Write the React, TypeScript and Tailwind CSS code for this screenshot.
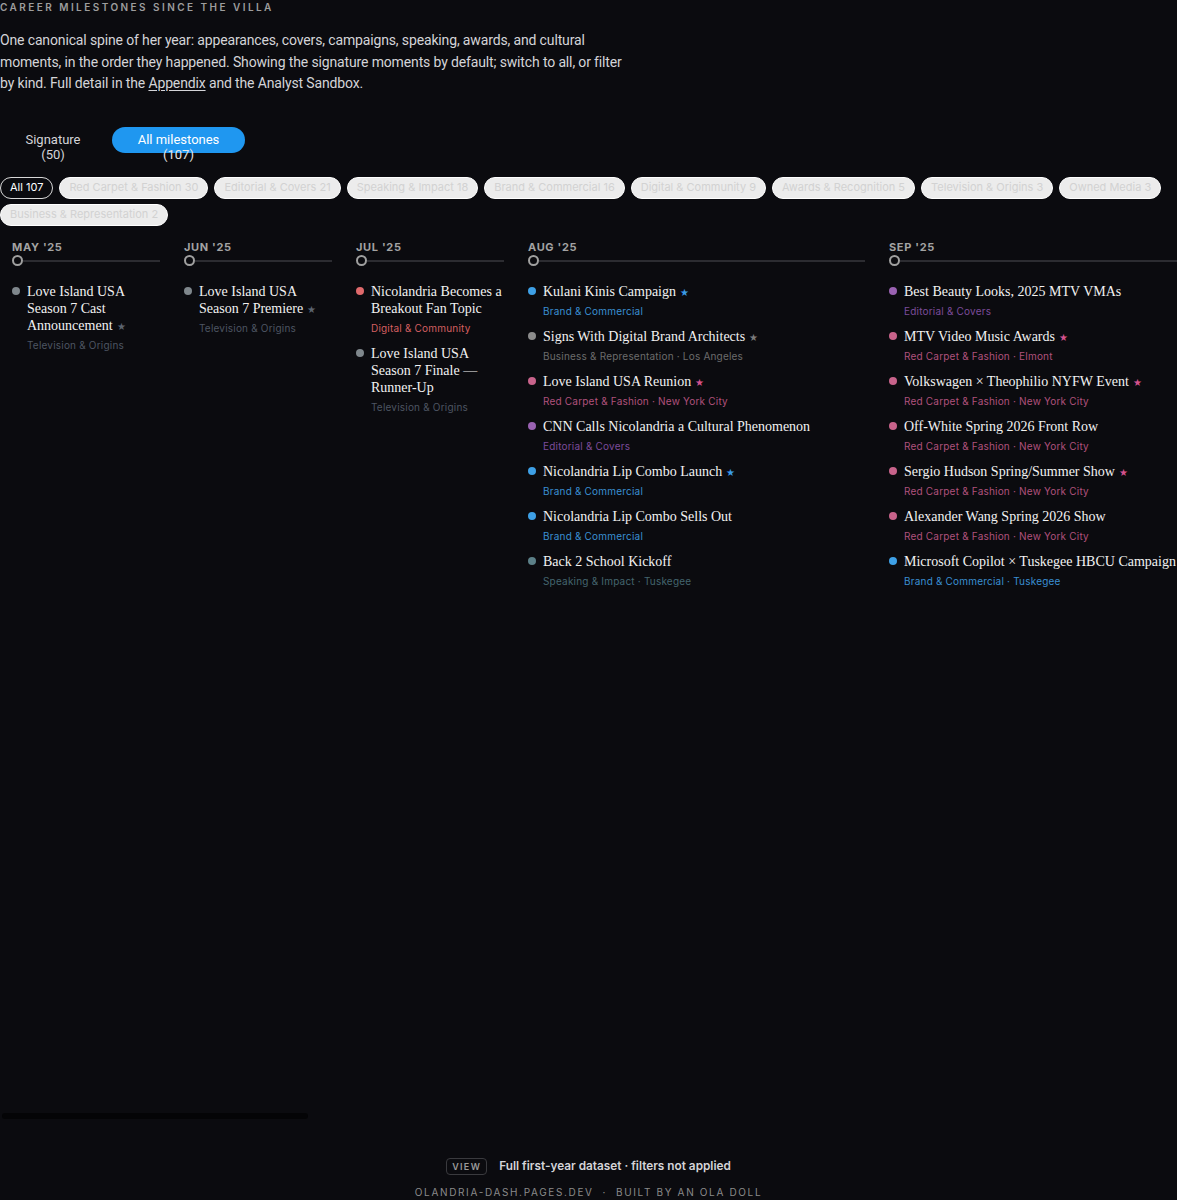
import React from "react";

type Kind = "tv" | "digital" | "brand" | "business" | "red" | "editorial" | "speaking";

const kinds: Record<Kind, { label: string; dot: string; meta: string; star: string }> = {
  tv: { label: "Television & Origins", dot: "bg-[#7f878c]", meta: "text-[#4d5562]", star: "text-[#5b636e]" },
  digital: { label: "Digital & Community", dot: "bg-[#e06a6c]", meta: "text-[#d45f60]", star: "text-[#d45f60]" },
  brand: { label: "Brand & Commercial", dot: "bg-[#3ea0e6]", meta: "text-[#3a8fd2]", star: "text-[#3a9be6]" },
  business: { label: "Business & Representation", dot: "bg-[#8c8c8c]", meta: "text-[#6c6c6c]", star: "text-[#7a7a7a]" },
  red: { label: "Red Carpet & Fashion", dot: "bg-[#c8638b]", meta: "text-[#b0517c]", star: "text-[#d4528c]" },
  editorial: { label: "Editorial & Covers", dot: "bg-[#9a62b2]", meta: "text-[#7c4b9a]", star: "text-[#9a62b2]" },
  speaking: { label: "Speaking & Impact", dot: "bg-[#5c8088]", meta: "text-[#44656e]", star: "text-[#5c8088]" },
};

type Item = { title: string; kind: Kind; place?: string; star?: boolean };
type Month = { label: string; wide?: boolean; items: Item[] };

const months: Month[] = [
  { label: "MAY '25", items: [{ title: "Love Island USA Season 7 Cast Announcement", kind: "tv", star: true }] },
  { label: "JUN '25", items: [{ title: "Love Island USA Season 7 Premiere", kind: "tv", star: true }] },
  {
    label: "JUL '25",
    items: [
      { title: "Nicolandria Becomes a Breakout Fan Topic", kind: "digital" },
      { title: "Love Island USA Season 7 Finale — Runner-Up", kind: "tv" },
    ],
  },
  {
    label: "AUG '25",
    wide: true,
    items: [
      { title: "Kulani Kinis Campaign", kind: "brand", star: true },
      { title: "Signs With Digital Brand Architects", kind: "business", place: "Los Angeles", star: true },
      { title: "Love Island USA Reunion", kind: "red", place: "New York City", star: true },
      { title: "CNN Calls Nicolandria a Cultural Phenomenon", kind: "editorial" },
      { title: "Nicolandria Lip Combo Launch", kind: "brand", star: true },
      { title: "Nicolandria Lip Combo Sells Out", kind: "brand" },
      { title: "Back 2 School Kickoff", kind: "speaking", place: "Tuskegee" },
    ],
  },
  {
    label: "SEP '25",
    wide: true,
    items: [
      { title: "Best Beauty Looks, 2025 MTV VMAs", kind: "editorial" },
      { title: "MTV Video Music Awards", kind: "red", place: "Elmont", star: true },
      { title: "Volkswagen × Theophilio NYFW Event", kind: "red", place: "New York City", star: true },
      { title: "Off-White Spring 2026 Front Row", kind: "red", place: "New York City" },
      { title: "Sergio Hudson Spring/Summer Show", kind: "red", place: "New York City", star: true },
      { title: "Alexander Wang Spring 2026 Show", kind: "red", place: "New York City" },
      { title: "Microsoft Copilot × Tuskegee HBCU Campaign", kind: "brand", place: "Tuskegee" },
    ],
  },
];

const chips = [
  "Red Carpet & Fashion 30",
  "Editorial & Covers 21",
  "Speaking & Impact 18",
  "Brand & Commercial 16",
  "Digital & Community 9",
  "Awards & Recognition 5",
  "Television & Origins 3",
  "Owned Media 3",
  "Business & Representation 2",
];

const inter = "font-['Inter','Liberation_Sans',sans-serif]";
const roboto = "font-['Roboto','Liberation_Sans',sans-serif]";
const serif = "font-['Liberation_Serif','DejaVu_Serif',serif]";

function MonthColumn({ m }: { m: Month }) {
  return (
    <div className={`${m.wide ? "w-[361px]" : "w-[172px]"} shrink-0 px-3`}>
      <div className="text-[11px] leading-[14px] font-bold tracking-[0.06em] text-[#a3a3a3]">{m.label}</div>
      <div className="mt-[1px] flex items-center h-[12px]">
        <div className="w-[11px] h-[11px] rounded-full border-2 border-[#a0a0a0] bg-[#0b0b0f] shrink-0" />
        <div className="flex-1 h-[2px] bg-[#2c2c31]" />
      </div>
      <div className="mt-[16px] flex flex-col gap-[10px]">
        {m.items.map((it) => {
          const k = kinds[it.kind];
          return (
            <div key={it.title} className="flex gap-[7px]">
              <div className={`w-2 h-2 rounded-full mt-[4.5px] shrink-0 ${k.dot}`} />
              <div className="min-w-0">
                <div className={`${serif} text-[14px] leading-[17px] text-[#f2f2f2]`}>
                  {it.title}
                  {it.star && <span className={`${k.star} text-[10px] leading-none ml-[4px]`}>★</span>}
                </div>
                <div className={`mt-[4px] text-[10px] leading-[14px] tracking-[0.02em] ${k.meta}`}>
                  {k.label}
                  {it.place && <span> · {it.place}</span>}
                </div>
              </div>
            </div>
          );
        })}
      </div>
    </div>
  );
}

export default function App() {
  return (
    <div className={`${inter} bg-[#0b0b0f] min-h-screen w-full overflow-hidden text-[#d6d6d6]`}>
      <div className="text-[10px] leading-[14px] font-semibold tracking-[0.245em] text-[#9d9d9d]">
        CAREER MILESTONES SINCE THE VILLA
      </div>
      <p
        className={`${roboto} mt-[16px] max-w-[634px] text-[14px] leading-[21.5px] tracking-[-0.01em] text-[#d4d4d8]`}
      >
        One canonical spine of her year: appearances, covers, campaigns, speaking, awards, and cultural moments, in the
        order they happened. Showing the signature moments by default; switch to all, or filter by kind. Full detail in
        the <span className="underline underline-offset-2">Appendix</span> and the Analyst Sandbox.
      </p>

      <div className={`${roboto} mt-[32px] flex gap-3 pl-1.5 text-[13px]`}>
        <button className="w-[94px] h-[26px] rounded-full pt-[5px] flex flex-col items-center text-[#d4d4d8]">
          <span className="leading-[15px]">Signature</span>
          <span className="leading-[15px]">(50)</span>
        </button>
        <button className="w-[133px] h-[26px] rounded-full pt-[5px] flex flex-col items-center bg-[#1f97f0] text-white">
          <span className="leading-[15px]">All milestones</span>
          <span className="leading-[15px] text-[#e6e6e6]">(107)</span>
        </button>
      </div>

      <div className="mt-[24px] flex flex-wrap gap-x-[6px] gap-y-[5px] text-[11px]">
        <span className="h-[22px] px-[9px] rounded-full border border-[#d8d8d8] text-white flex items-center">
          All 107
        </span>
        {chips.map((c) => (
          <span
            key={c}
            className="h-[22px] px-[9px] rounded-full border border-white bg-[#ececec] text-[#d2d2d2] flex items-center"
          >
            {c}
          </span>
        ))}
      </div>

      <div className="mt-[14px] h-[879px] flex flex-col">
        <div className="flex flex-1 w-[4500px]">
          {months.map((m) => (
            <MonthColumn key={m.label} m={m} />
          ))}
        </div>
        <div className="ml-[2px] h-[6px] w-[306px] rounded-full bg-[#040406]" />
      </div>

      <div className="mt-[39px] flex items-center justify-center gap-3">
        <span className="h-[17px] px-[5px] rounded border border-[#3a3a3e] text-[9px] tracking-[0.15em] font-semibold text-[#9a9a9a] flex items-center">
          VIEW
        </span>
        <span className="text-[11.8px] font-semibold text-[#d4d4d8]">Full first-year dataset · filters not applied</span>
      </div>
      <div className="mt-[10px] pb-4 text-center text-[10px] tracking-[0.165em] text-[#8a8a8a]">
        OLANDRIA-DASH.PAGES.DEV &nbsp;·&nbsp; BUILT BY AN OLA DOLL
      </div>
    </div>
  );
}
